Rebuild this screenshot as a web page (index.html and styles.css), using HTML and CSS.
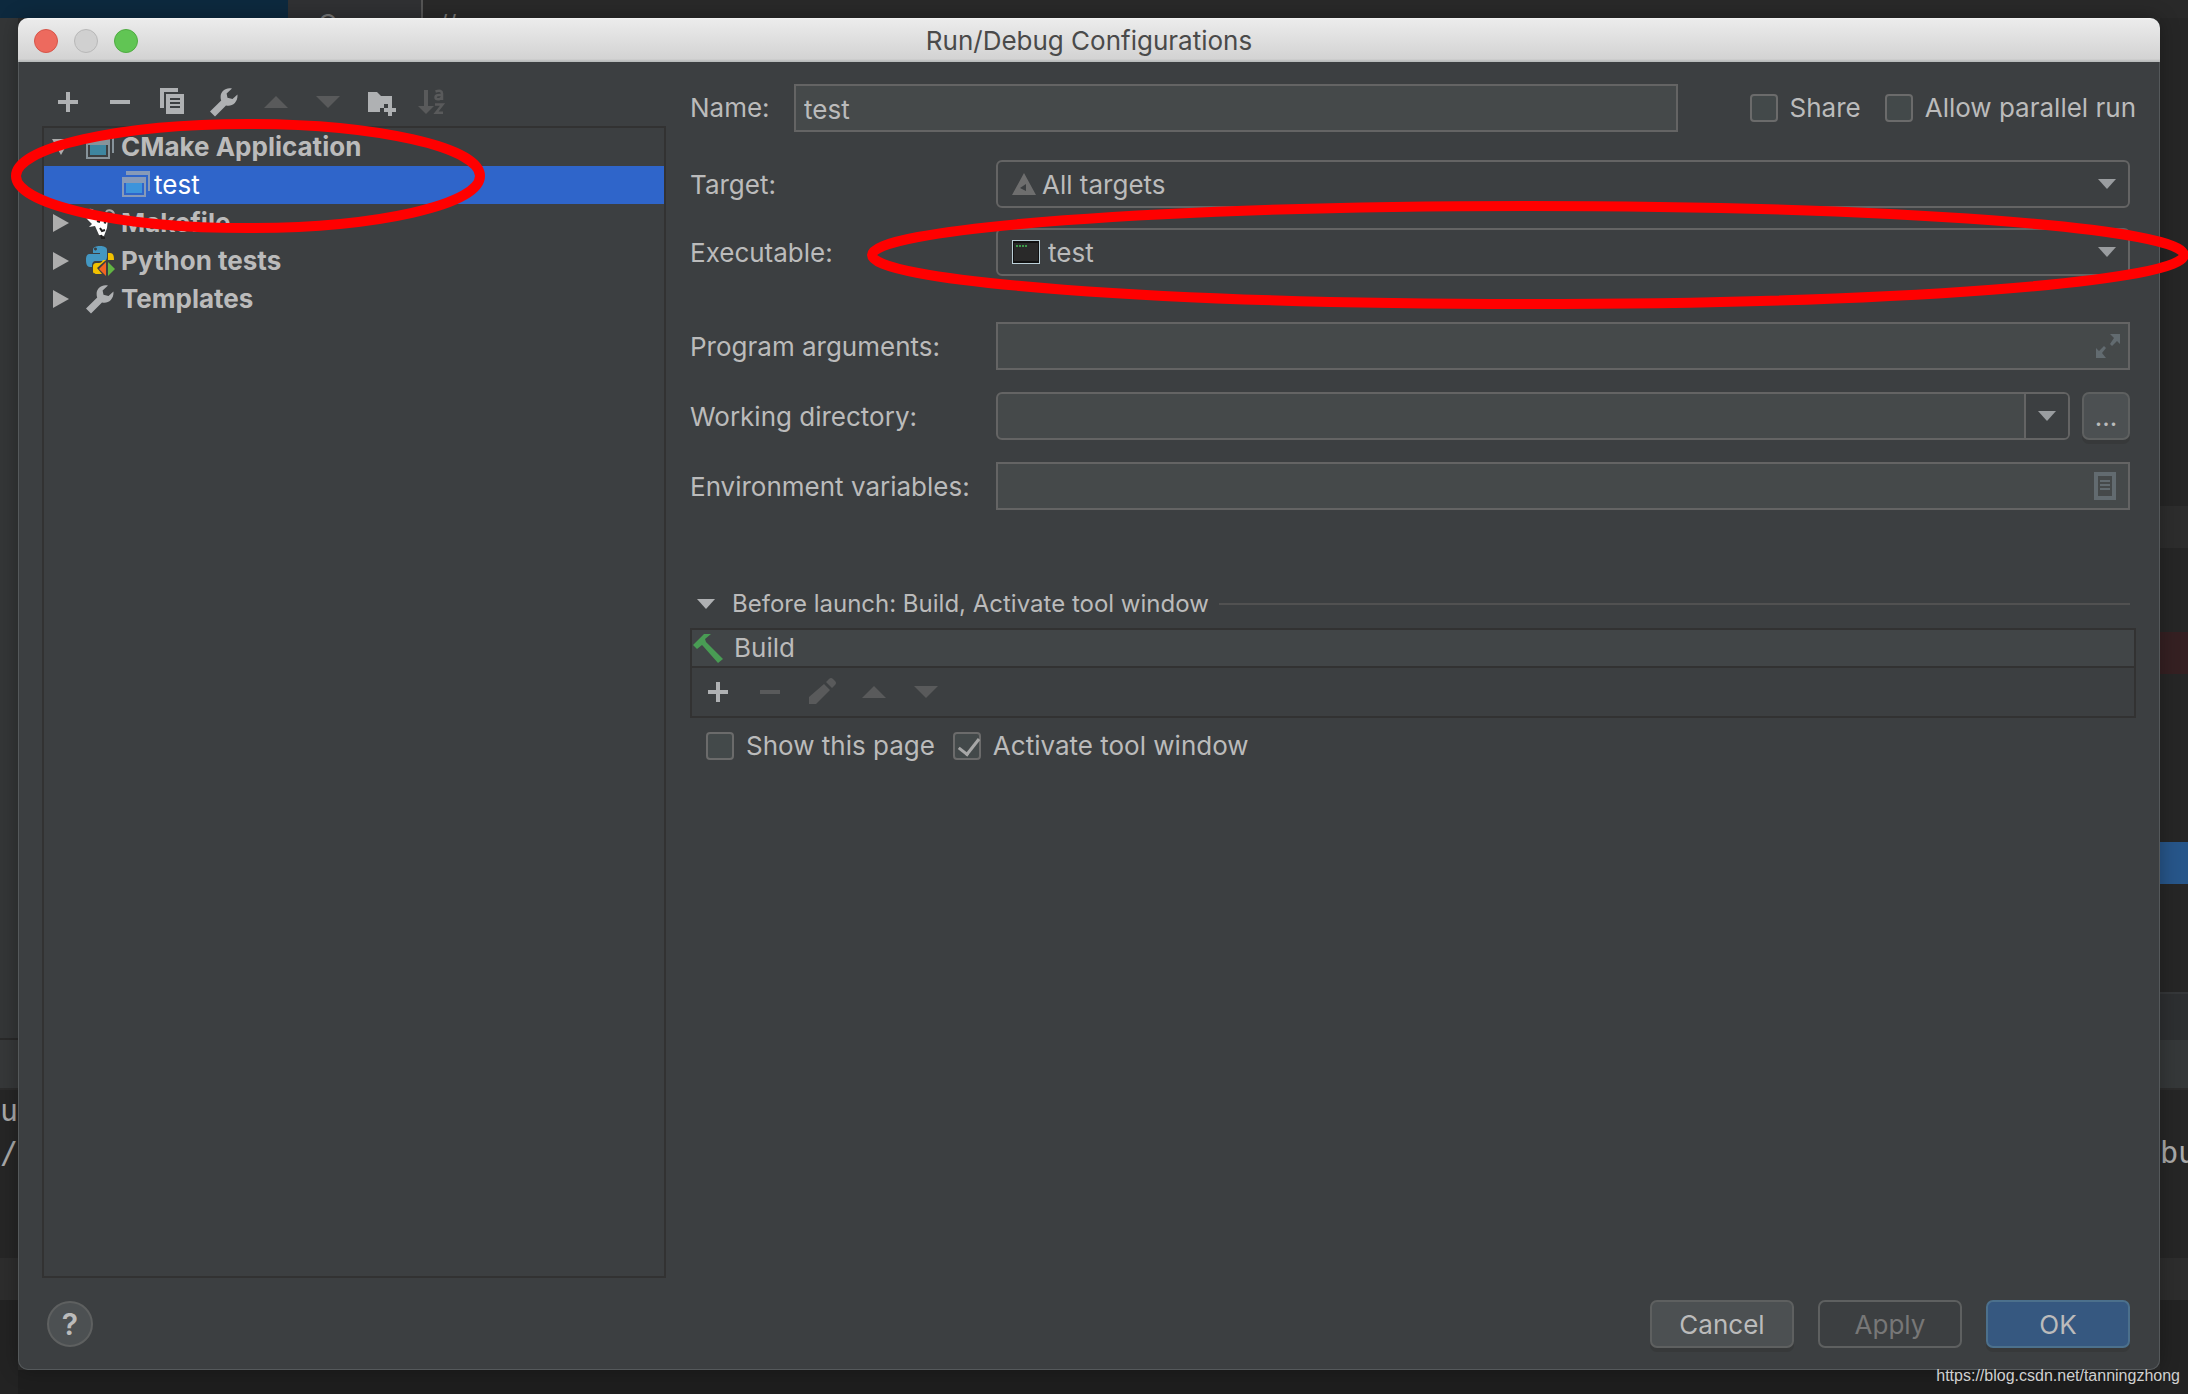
FILE: index.html
```html
<!DOCTYPE html>
<html lang="en">
<head>
<meta charset="utf-8">
<title>Run/Debug Configurations</title>
<link rel="stylesheet" href="styles.css">
</head>
<body>
<svg class="defs" aria-hidden="true">
  <symbol id="plus" viewBox="0 0 32 32"><path d="M14 6h4v8h8v4h-8v8h-4v-8H6v-4h8z"/></symbol>
  <symbol id="minus" viewBox="0 0 32 32"><path d="M6 14h20v4H6z"/></symbol>
  <symbol id="up" viewBox="0 0 32 32"><path d="M4 22L16 10l12 12z"/></symbol>
  <symbol id="down" viewBox="0 0 32 32"><path d="M4 10h24L16 22z"/></symbol>
  <symbol id="wrench" viewBox="0 0 32 32"><path d="M29.500 8.500l-5 4.500-5-1.200-.9-4.300L24 2.600C18 1.200 12.500 5 12.600 11c0 1.500.2 2.500.6 3.600L2 25.500l5 5L18 19.400c5 1.700 12-2 11.500-10.900z"/></symbol>
  <symbol id="app" viewBox="0 0 32 32"><path d="M6 2h24v20h-2V6H6z"/><path fill-rule="evenodd" d="M2 8h24v20H2zm2 6v12h20V14z"/><path class="app-fill" d="M6 14h16v10H6z"/></symbol>
  <symbol id="chev-right" viewBox="0 0 18 18"><path d="M1 0l16 9-16 9z"/></symbol>
  <symbol id="chev-down" viewBox="0 0 18 18"><path d="M0 4h18L9 14z"/></symbol>
  <symbol id="chev-open" viewBox="0 0 18 18"><path d="M0 1h18L9 17z"/></symbol>
</svg>

<div class="backdrop" aria-hidden="true">
  <div class="editor-tabs"><span class="tab-active"></span><span class="tab">C</span><span class="code">//</span></div>
  <div class="strip strip-left">
    <div class="l-panel"></div><div class="l-head"></div>
    <div class="console">u<br>/</div><div class="band"></div><div class="rest"></div>
  </div>
  <div class="strip strip-right">
    <div class="r-editor"></div><div class="band"></div><div class="r-gap"></div><div class="r-red"></div>
    <div class="r-editor2"></div><div class="r-blue"></div><div class="r-gap2"></div><div class="r-tabs"></div><div class="r-head"></div>
    <div class="console"><br>bu</div><div class="band"></div><div class="rest"></div>
  </div>
</div>

<main class="dialog">
  <header class="titlebar">
    <div class="lights"><button class="light close" aria-label="Close"></button><button class="light mini" aria-label="Minimize"></button><button class="light full" aria-label="Zoom"></button></div>
    <h1>Run/Debug Configurations</h1>
  </header>

  <div class="content">
    <section class="side">
      <div class="toolbar">
        <button aria-label="Add"><svg><use href="#plus"/></svg></button>
        <button aria-label="Remove"><svg><use href="#minus"/></svg></button>
        <button aria-label="Copy"><svg viewBox="0 0 32 32"><path d="M4 2h18v4H8v16H4z"/><path fill-rule="evenodd" d="M10 8h18v20H10zm4 4v2h10v-2zm0 4v2h10v-2zm0 4v2h10v-2z"/></svg></button>
        <button aria-label="Edit templates"><svg><use href="#wrench"/></svg></button>
        <button aria-label="Move up" disabled><svg><use href="#up"/></svg></button>
        <button aria-label="Move down" disabled><svg><use href="#down"/></svg></button>
        <button aria-label="New folder"><svg viewBox="0 0 32 32"><path d="M4 6h9l4 4h11v8h-8v4h-4v4H4z"/><path d="M24 18h4v4h4v4h-4v4h-4v-4h-4v-4h4z"/></svg></button>
        <button aria-label="Sort" disabled><svg viewBox="0 0 32 32"><path d="M8 4h4v16h6l-8 8-8-8h6z"/><path fill="none" stroke="currentColor" stroke-width="2.500" d="M19.500 5.500q6.500-2 6.500 2V14M26 9h-3q-3.500 0-3.500 2.300 0 2 2.500 2t4-2.500M19 18.500h7.500L20 26.700h7"/></svg></button>
      </div>
      <ul class="tree">
        <li><svg class="chev"><use href="#chev-open"/></svg><svg class="icon app"><use href="#app"/></svg><b>CMake Application</b></li>
        <li class="child selected"><svg class="icon app"><use href="#app"/></svg><span>test</span></li>
        <li><svg class="chev"><use href="#chev-right"/></svg><svg class="icon" viewBox="0 0 32 32"><path fill="none" stroke="#aaa" stroke-width="2" d="M9 11C1 14 0 5 5 3c5-1 6 3 4 4M22 9c2 5 8 4 8-1 0-5-6-6-8-3"/><path fill="#fff" d="M3 12l7-2 5-3 7 2 2 3-1 9-3 8-5-1-4-9-6 1 3-3z"/><path fill="none" stroke="#222" stroke-width="2" d="M13 14l3 1m4 0l2 1m-6 5l2 3 3-1m-4 5l1 3h3"/></svg><b>Makefile</b></li>
        <li><svg class="chev"><use href="#chev-right"/></svg><svg class="icon" viewBox="0 0 32 32"><path fill="#4397c2" fill-rule="evenodd" d="M9 8V5c0-3 3-4 7-4s7 1 7 4v7c0 3-2 4-4 4h-7c-3 0-4 2-4 5v1H6c-3 0-4-3-4-7s1-6 4-6h10V8zm4-4a1.500 1.500 0 1 0 0 .1z"/><path fill="#f2c100" d="M24 8h2c3 0 4 2 4 7H19c-1 2-2 3-4 3h-2c-3 0-4 1-4 4v4c0 3 2 3 5 3h4l-5-6 9-8h2z"/><path fill="#f26522" d="M22 17v14l-7-7z"/><path fill="#62b543" d="M24 17v14l7-7z"/></svg><b>Python tests</b></li>
        <li><svg class="chev"><use href="#chev-right"/></svg><svg class="icon"><use href="#wrench"/></svg><b>Templates</b></li>
      </ul>
    </section>

    <form class="form" onsubmit="return false">
      <div class="name-row">
        <label for="name">Name:</label>
        <input class="text" id="name" type="text" value="test">
        <div class="checks">
          <label class="check"><input type="checkbox">Share</label>
          <label class="check"><input type="checkbox">Allow parallel run</label>
        </div>
      </div>
      <div class="fields">
        <div class="row">
          <label for="target">Target:</label>
          <div class="field combo">
            <svg class="mark" viewBox="0 0 24 24"><path fill="#6e6e6e" fill-rule="evenodd" d="M12 1l12 22H0zm2 11l-6 4 6 3z"/></svg>
            <select id="target"><option>All targets</option></select>
            <svg class="arrow"><use href="#chev-down"/></svg>
          </div>
        </div>
        <div class="row exec">
          <label for="exec">Executable:</label>
          <div class="field combo">
            <svg class="mark wide" viewBox="0 0 28 24"><path fill="#bcd0d8" d="M0 0h28v24H0z"/><path fill="#111" d="M1 1h26v22H1z"/><path fill="#292929" d="M2 3h24v18H2z"/><path stroke="#3c9a48" stroke-width="2" stroke-dasharray="2 1" d="M4 6h11"/></svg>
            <select class="spaced" id="exec"><option>test</option></select>
            <svg class="arrow"><use href="#chev-down"/></svg>
          </div>
        </div>
        <div class="row">
          <label for="args">Program arguments:</label>
          <div class="field box"><input id="args" type="text"><svg class="tool" viewBox="0 0 24 24"><path d="M14 0h10v10l-3-3-5 5-2-2 4-6zM0 14l3 3 5-5 2 2-4 5 4 5H0z"/></svg></div>
        </div>
        <div class="row">
          <label for="dir">Working directory:</label>
          <div class="field pair">
            <div class="box round"><input id="dir" type="text"><button class="drop" aria-label="Recent directories"><svg><use href="#chev-down"/></svg></button></div>
            <button class="btn browse" aria-label="Browse">...</button>
          </div>
        </div>
        <div class="row">
          <label for="env">Environment variables:</label>
          <div class="field box"><input id="env" type="text"><svg class="tool doc" viewBox="0 0 22 28"><path fill-rule="evenodd" d="M0 0h22v28H0zm4 4v20h14V4zm2 4h10v2H6zm0 4h10v2H6zm0 4h10v2H6z"/></svg></div>
        </div>
      </div>

      <section class="launch">
        <h2><svg><use href="#chev-down"/></svg><span>Before launch: Build, Activate tool window</span><i></i></h2>
        <div class="tasks">
          <div class="task"><svg viewBox="0 0 32 32"><path fill="#499c54" d="M12 2h7l-6 5 1 3 17 17-5 4L11 14l-1-1-5 4-4-4z"/></svg>Build</div>
          <div class="toolbar">
            <button aria-label="Add task"><svg><use href="#plus"/></svg></button>
            <button aria-label="Remove task" disabled><svg><use href="#minus"/></svg></button>
            <button aria-label="Edit task" disabled><svg viewBox="0 0 32 32"><path d="M18 8l6 6-14 14H3v-7zM20 6l3-3q2-2 4 0l2 2q2 2 0 4l-3 3z"/></svg></button>
            <button aria-label="Task up" disabled><svg><use href="#up"/></svg></button>
            <button aria-label="Task down" disabled><svg><use href="#down"/></svg></button>
          </div>
        </div>
        <div class="options">
          <label class="check"><input type="checkbox">Show this page</label>
          <label class="check"><input type="checkbox" checked>Activate tool window</label>
        </div>
      </section>
    </form>
  </div>

  <footer class="footer">
    <button class="help" aria-label="Help">?</button>
    <div class="actions"><button class="btn">Cancel</button><button class="btn apply" disabled>Apply</button><button class="btn ok">OK</button></div>
  </footer>
</main>

<svg class="marks" viewBox="0 0 2188 1394" preserveAspectRatio="none" aria-hidden="true">
  <ellipse cx="248" cy="176" rx="232" ry="52"/>
  <ellipse cx="1528" cy="255" rx="656" ry="49"/>
</svg>
<a class="credit" href="https://blog.csdn.net/tanningzhong">https://blog.csdn.net/tanningzhong</a>
</body>
</html>
```
FILE: styles.css
```css
* { box-sizing: border-box; }
body {
  margin: 0;
  height: 100vh;
  padding: 18px 28px 24px 18px;
  display: flex;
  position: relative;
  overflow: hidden;
  background: #202020;
  color: #bbbbbb;
  font: 26px/32px Inter, "Liberation Sans", sans-serif;
}
button, input, select { font: inherit; color: inherit; }
button { padding: 0; border: 0; background: none; }
svg { display: block; fill: currentColor; flex: none; }
.defs { position: absolute; width: 0; height: 0; }

/* IDE window showing around the dialog */
.backdrop {
  position: absolute;
  inset: 0;
  display: grid;
  grid-template: 18px 1fr / 1fr 1fr;
  background: linear-gradient(#2b2b2b 1370px, #1e1e1e 1370px);
}
.editor-tabs { grid-column: 1 / 3; display: flex; overflow: hidden; background: #292929; color: #777777; }
.tab-active { width: 288px; background: #0d293e; }
.tab { width: 135px; padding: 8px 0 0 30px; background: #303133; border-right: 2px solid #555555; }
.code { padding: 8px 0 0 16px; font-size: 24px; }
.strip { display: flex; flex-direction: column; width: 18px; }
.strip-right { justify-self: end; width: 28px; background: #262626; }
.console { height: 168px; overflow: hidden; background: #262626; color: #a9a9a9; font: 30px/42px "DejaVu Sans Mono", monospace; }
.strip-left .console { direction: rtl; }
.band { height: 42px; background: #2d2d2d; }
.rest { flex: 1; background: #232323; }
.l-panel { height: 1022px; background: #343637; border-bottom: 2px solid #292929; }
.l-head { height: 50px; background: #363839; border-bottom: 2px solid #2c2c2c; }
.r-editor { height: 488px; }
.r-gap { height: 84px; }
.r-red { height: 42px; background: #352022; }
.r-editor2 { height: 168px; }
.r-blue { height: 42px; background: #27568a; }
.r-gap2 { height: 108px; }
.r-tabs { height: 48px; background: #2d2f31; border-top: 2px solid #353739; }
.r-head { height: 50px; background: #353839; border-bottom: 2px solid #2c2c2c; }

/* dialog */
.dialog {
  position: relative;
  flex: 1;
  display: flex;
  flex-direction: column;
  overflow: hidden;
  border-radius: 10px;
  background: #3c3f41;
  box-shadow: inset 0 0 0 1px #55595b, 0 0 20px rgba(0, 0, 0, .3);
}
.titlebar {
  display: grid;
  grid-template-columns: 1fr auto 1fr;
  align-items: center;
  height: 44px;
  padding: 1px 16px 0;
  background: linear-gradient(#f5f5f5, #ebebeb 2px, #d3d3d3 41px, #b9bcbc 43px);
  color: #4a4a4a;
}
.titlebar h1 { margin: 0; font: inherit; }
.lights { display: flex; gap: 16px; }
.light { width: 24px; height: 24px; border-radius: 50%; border: 1px solid; }
.close { background: #ed6a5e; border-color: #d65549; }
.mini { background: #d0d0d0; border-color: #b8b8b8; }
.full { background: #61c554; border-color: #4fac42; }

.content { flex: 1; display: flex; gap: 24px; padding: 22px 24px 0; min-height: 0; }
.side { width: 624px; display: flex; flex-direction: column; }
.toolbar { display: flex; align-items: center; gap: 20px; height: 42px; padding: 0 10px 6px; color: #afb1b3; }
.toolbar svg { width: 32px; height: 32px; }
.toolbar button:disabled { color: #595a5b; }
.tree { flex: 1; margin: 0; padding: 0; border: 2px solid #323232; list-style: none; }
.tree li { display: flex; align-items: center; height: 38px; padding-left: 8px; }
.tree .chev { width: 18px; height: 18px; margin-right: 14px; color: #adadad; }
.tree .icon { width: 32px; height: 32px; margin-right: 5px; color: #afb1b3; }
.tree .child { padding-left: 76px; }
.tree .child .icon { margin-right: 2px; }
.tree .selected { background: #2f65ca; color: #ffffff; }
.tree .app { color: #87939a; }
.app-fill { fill: #3e86a0; }
.tree .selected .app { --app-fill: #3d94db; color: #879ab8; }
.app-fill { fill: var(--app-fill, #3e86a0); }
.tree b { font-weight: 700; }

.form { flex: 1; display: flex; flex-direction: column; min-width: 0; }
.name-row { display: flex; align-items: center; }
.name-row > label { width: 104px; }
.text { flex: 1; min-width: 0; height: 48px; padding: 2px 8px 0; }
.text, .box { border: 2px solid #646464; background: #45494a; outline: 0; }
.checks { display: flex; gap: 24px; margin-left: 72px; }
.check { display: flex; align-items: center; gap: 12px; white-space: nowrap; }
.check input {
  appearance: none;
  width: 28px;
  height: 28px;
  margin: 0;
  border: 2px solid #6b6b6b;
  border-radius: 4px;
  background: #43494a;
}
.check input:checked::after {
  content: "";
  display: block;
  width: 9px;
  height: 18px;
  margin: 0 0 0 8px;
  border: solid #a7a7a7;
  border-width: 0 3px 3px 0;
  rotate: 38deg;
}
.fields { display: grid; gap: 22px; padding: 28px 6px 0 0; }
.row { display: flex; align-items: center; height: 48px; }
.row > label { width: 306px; padding-top: 2px; white-space: nowrap; }
.row.exec { margin: -2px 0 24px; }
.field { flex: 1; }
.field, .box { display: flex; align-items: center; height: 48px; }
.box { flex: 1; }
.box input { flex: 1; min-width: 0; border: 0; outline: 0; background: none; }
.combo { padding: 0 14px; border: 2px solid #646464; border-radius: 6px; }
.combo select { flex: 1; padding: 2px 6px 0; border: 0; outline: 0; appearance: none; background: none; }
.combo .spaced { padding-left: 8px; }
.mark { width: 24px; height: 24px; }
.wide { width: 28px; }
.arrow { width: 18px; height: 18px; color: #9a9da0; margin-right: -2px; }
.tool { width: 24px; height: 24px; margin-right: 8px; color: #626b70; }
.doc { width: 22px; height: 28px; margin-right: 12px; }
.pair { gap: 12px; }
.round { border-radius: 6px; overflow: hidden; }
.drop { width: 44px; height: 44px; padding-left: 12px; border-left: 2px solid #646464; background: #3c3f41; color: #9a9da0; }
.drop svg { width: 18px; height: 18px; }
.btn {
  width: 144px;
  height: 48px;
  padding-top: 2px;
  border: 2px solid #5e6060;
  border-radius: 7px;
  background: #4c5052;
  box-shadow: 0 4px 0 #37393a;
}
.browse { width: 48px; }

.launch { margin-top: 78px; }
.launch h2 { display: flex; align-items: center; margin: 0; padding: 0 6px 0 7px; font: 24px/32px Inter, "Liberation Sans", sans-serif; white-space: nowrap; }
.launch h2 svg { width: 18px; height: 18px; margin-right: 17px; color: #afb1b3; }
.launch h2 i { flex: 1; height: 2px; margin-left: 10px; background: #515151; }
.tasks { margin-top: 8px; border: 2px solid #323232; }
.task { display: flex; align-items: center; gap: 10px; height: 38px; border-bottom: 2px solid #323232; background: #414547; }
.task svg { width: 32px; height: 32px; }
.tasks .toolbar { height: 48px; padding: 0 10px; }
.options { display: flex; gap: 18px; padding: 12px 16px; }

.footer { display: flex; justify-content: space-between; align-items: center; padding: 22px 30px 22px 29px; }
.actions { display: flex; gap: 24px; }
.apply { background: none; box-shadow: none; color: #777777; }
.ok { background: #365880; border-color: #4c708c; }
.help { width: 46px; height: 46px; border: 2px solid #5e6060; border-radius: 50%; background: #4c5052; font-size: 30px; font-weight: 600; }

.marks { position: absolute; inset: 0; width: 100%; height: 100%; pointer-events: none; fill: none; stroke: #ff0000; stroke-width: 10px; }
.credit { position: absolute; right: 8px; bottom: 8px; color: #d0d0d0; font: 16px/20px "Liberation Sans", sans-serif; text-decoration: none; }
```
